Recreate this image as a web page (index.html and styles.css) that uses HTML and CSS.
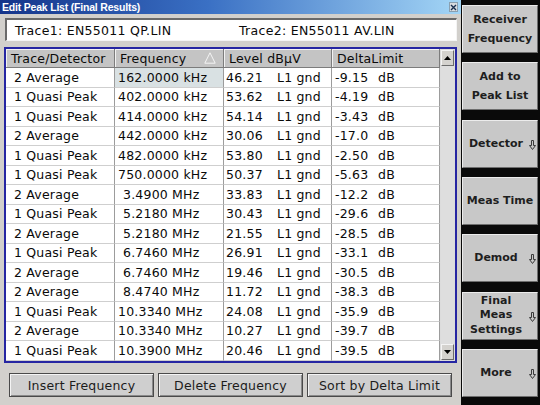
FILE: index.html
```html
<!DOCTYPE html>
<html>
<head>
<meta charset="utf-8">
<link rel="stylesheet" href="styles.css">
</head>
<body>
<div class="screen">
  <div class="dialog">
    <div class="titlebar">
      <span class="title">Edit Peak List (Final Results)</span>
      <span class="close"><svg width="7" height="7" viewBox="0 0 7 7"><path d="M1 1 L6 6 M6 1 L1 6" stroke="#1a3050" stroke-width="1.4"/></svg></span>
    </div>
    <div class="tracebox">
      <span class="t1">Trace1: EN55011 QP.LIN</span>
      <span class="t2">Trace2: EN55011 AV.LIN</span>
    </div>
    <div class="tableframe">
      <div class="peaks">
        <div class="hd">Trace/Detector</div>
        <div class="hd freq-hd">Frequency <svg class="sort" width="12" height="12" viewBox="0 0 12 12"><path d="M6 0.8 L11.2 11.2 L0.8 11.2 Z" fill="none" stroke="#f4f4f4" stroke-width="1"/></svg></div>
        <div class="hd">Level dBµV</div>
        <div class="hd">DeltaLimit</div>

        <div class="c tr">2 Average</div><div class="c fq sel">162.0000 kHz</div><div class="c lv"><span class="n">46.21</span>L1 gnd</div><div class="c dl"><span class="n">-9.15</span>dB</div>
        <div class="c tr">1 Quasi Peak</div><div class="c fq">402.0000 kHz</div><div class="c lv"><span class="n">53.62</span>L1 gnd</div><div class="c dl"><span class="n">-4.19</span>dB</div>
        <div class="c tr">1 Quasi Peak</div><div class="c fq">414.0000 kHz</div><div class="c lv"><span class="n">54.14</span>L1 gnd</div><div class="c dl"><span class="n">-3.43</span>dB</div>
        <div class="c tr">2 Average</div><div class="c fq">442.0000 kHz</div><div class="c lv"><span class="n">30.06</span>L1 gnd</div><div class="c dl"><span class="n">-17.0</span>dB</div>
        <div class="c tr">1 Quasi Peak</div><div class="c fq">482.0000 kHz</div><div class="c lv"><span class="n">53.80</span>L1 gnd</div><div class="c dl"><span class="n">-2.50</span>dB</div>
        <div class="c tr">1 Quasi Peak</div><div class="c fq">750.0000 kHz</div><div class="c lv"><span class="n">50.37</span>L1 gnd</div><div class="c dl"><span class="n">-5.63</span>dB</div>
        <div class="c tr">2 Average</div><div class="c fq short">3.4900 MHz</div><div class="c lv"><span class="n">33.83</span>L1 gnd</div><div class="c dl"><span class="n">-12.2</span>dB</div>
        <div class="c tr">1 Quasi Peak</div><div class="c fq short">5.2180 MHz</div><div class="c lv"><span class="n">30.43</span>L1 gnd</div><div class="c dl"><span class="n">-29.6</span>dB</div>
        <div class="c tr">2 Average</div><div class="c fq short">5.2180 MHz</div><div class="c lv"><span class="n">21.55</span>L1 gnd</div><div class="c dl"><span class="n">-28.5</span>dB</div>
        <div class="c tr">1 Quasi Peak</div><div class="c fq short">6.7460 MHz</div><div class="c lv"><span class="n">26.91</span>L1 gnd</div><div class="c dl"><span class="n">-33.1</span>dB</div>
        <div class="c tr">2 Average</div><div class="c fq short">6.7460 MHz</div><div class="c lv"><span class="n">19.46</span>L1 gnd</div><div class="c dl"><span class="n">-30.5</span>dB</div>
        <div class="c tr">2 Average</div><div class="c fq short">8.4740 MHz</div><div class="c lv"><span class="n">11.72</span>L1 gnd</div><div class="c dl"><span class="n">-38.3</span>dB</div>
        <div class="c tr">1 Quasi Peak</div><div class="c fq">10.3340 MHz</div><div class="c lv"><span class="n">24.08</span>L1 gnd</div><div class="c dl"><span class="n">-35.9</span>dB</div>
        <div class="c tr">2 Average</div><div class="c fq">10.3340 MHz</div><div class="c lv"><span class="n">10.27</span>L1 gnd</div><div class="c dl"><span class="n">-39.7</span>dB</div>
        <div class="c tr">1 Quasi Peak</div><div class="c fq">10.3900 MHz</div><div class="c lv"><span class="n">20.46</span>L1 gnd</div><div class="c dl"><span class="n">-39.5</span>dB</div>
      </div>
      <div class="scrollbar">
        <div class="sbtn"><svg width="7" height="4" viewBox="0 0 7 4"><path d="M3.5 0 L7 4 L0 4 Z" fill="#000"/></svg></div>
        <div class="track"></div>
        <div class="sbtn"><svg width="7" height="4" viewBox="0 0 7 4"><path d="M0 0 L7 0 L3.5 4 Z" fill="#000"/></svg></div>
      </div>
    </div>
    <div class="actions">
      <div class="btn">Insert Frequency</div>
      <div class="btn">Delete Frequency</div>
      <div class="btn">Sort by Delta Limit</div>
    </div>
  </div>
  <div class="softkeys">
    <div class="sk two"><span class="lbl">Receiver<br>Frequency</span></div>
    <div class="sk two"><span class="lbl">Add to<br>Peak List</span></div>
    <div class="sk"><span class="lbl">Detector</span><svg class="arr" width="7" height="10" viewBox="0 0 7 10"><path d="M2.5 0.5 H4.5 V5.5 H6.5 L3.5 9.5 L0.5 5.5 H2.5 Z" fill="none" stroke="#3a3a3a" stroke-width="1"/></svg></div>
    <div class="sk"><span class="lbl">Meas Time</span></div>
    <div class="sk"><span class="lbl">Demod</span><svg class="arr" width="7" height="10" viewBox="0 0 7 10"><path d="M2.5 0.5 H4.5 V5.5 H6.5 L3.5 9.5 L0.5 5.5 H2.5 Z" fill="none" stroke="#3a3a3a" stroke-width="1"/></svg></div>
    <div class="sk three"><span class="lbl">Final<br>Meas<br>Settings</span><svg class="arr" width="7" height="10" viewBox="0 0 7 10"><path d="M2.5 0.5 H4.5 V5.5 H6.5 L3.5 9.5 L0.5 5.5 H2.5 Z" fill="none" stroke="#3a3a3a" stroke-width="1"/></svg></div>
    <div class="sk"><span class="lbl">More</span><svg class="arr" width="7" height="10" viewBox="0 0 7 10"><path d="M2.5 0.5 H4.5 V5.5 H6.5 L3.5 9.5 L0.5 5.5 H2.5 Z" fill="none" stroke="#3a3a3a" stroke-width="1"/></svg></div>
  </div>
</div>
</body>
</html>
```

FILE: styles.css
```css
* { box-sizing: border-box; }
html, body { margin: 0; padding: 0; }
body {
  width: 540px;
  height: 405px;
  overflow: hidden;
  font-family: "DejaVu Sans", Verdana, sans-serif;
  color: #0a0a0a;
}
.screen {
  display: flex;
  width: 540px;
  height: 405px;
}
.dialog {
  width: 461px;
  height: 405px;
  background: #d2d0cc;
  display: flex;
  flex-direction: column;
}
.titlebar {
  height: 14px;
  background: linear-gradient(to right, #14348a 0%, #3a70c4 45%, #a4d6f6 100%);
  display: flex;
  align-items: center;
  justify-content: space-between;
  padding: 0 3px 0 2px;
}
.title {
  font-family: "Liberation Sans", Arial, sans-serif;
  font-weight: bold;
  font-size: 10.5px;
  color: #ffffff;
  letter-spacing: -0.2px;
  line-height: 14px;
}
.close {
  width: 9px;
  height: 10px;
  background: #d8dce0;
  border: 1px solid #8aa0b0;
  display: flex;
  align-items: center;
  justify-content: center;
}
.tracebox {
  margin: 4px 0 0 5px;
  width: 452px;
  height: 23px;
  background: #ffffff;
  border-top: 2px solid #6a6a6a;
  border-left: 2px solid #6a6a6a;
  border-bottom: 1px solid #f4f4f4;
  border-right: 1px solid #f4f4f4;
  display: flex;
  align-items: center;
  font-size: 12.5px;
  letter-spacing: 0.3px;
  padding-left: 8px;
}
.t1 { width: 224px; }
.tableframe {
  margin: 6px 0 0 4px;
  width: 453px;
  height: 316px;
  border: 2px solid #2626a2;
  display: flex;
  background: #ffffff;
}
.peaks {
  width: 434px;
  display: grid;
  grid-template-columns: 109px 109px 108px 108px;
  grid-template-rows: 19px repeat(15, 19.5px);
  font-size: 12.5px;
  letter-spacing: 0.2px;
}
.hd {
  background: #c4c4c4;
  border-right: 1px solid #7c7c7c;
  border-bottom: 1px solid #7c7c7c;
  box-shadow: inset 1px 1px 0 #f2f2f2;
  display: flex;
  align-items: center;
  padding-left: 5px;
  white-space: nowrap;
}
.freq-hd .sort { margin-left: 18px; }
.c {
  border-right: 1px solid #9c9c9c;
  border-bottom: 1px solid #cfcfcf;
  display: flex;
  align-items: center;
  white-space: nowrap;
  background: #ffffff;
}
.tr { padding-left: 8px; }
.fq { padding-left: 3px; }
.fq.short { padding-left: 8px; }
.sel { background: #d9e1e3; }
.lv { padding-left: 2px; }
.lv .n { width: 51px; }
.dl { padding-left: 3px; }
.dl .n { width: 43px; }
.scrollbar {
  width: 15px;
  display: flex;
  flex-direction: column;
  background: #dcdcdc;
  padding: 1px;
}
.sbtn {
  height: 16px;
  background: #d4d2ce;
  border-top: 1px solid #f4f4f4;
  border-left: 1px solid #f4f4f4;
  border-right: 1px solid #6c6c6c;
  border-bottom: 1px solid #6c6c6c;
  display: flex;
  align-items: center;
  justify-content: center;
}
.track { flex: 1; background: #dedede; }
.actions {
  margin-top: 10px;
  padding-left: 9px;
  display: flex;
  gap: 4px;
}
.btn {
  width: 145px;
  height: 24px;
  background: #cfcfcf;
  border: 1px solid #4a4a4a;
  box-shadow: inset 1px 1px 0 #f4f4f4, inset -1px -1px 0 #8a8a8a;
  display: flex;
  align-items: center;
  justify-content: center;
  font-size: 12.5px;
  letter-spacing: 0.2px;
  color: #1c1c1c;
}
.softkeys {
  width: 79px;
  height: 405px;
  background: #0a0a0a;
  padding: 5px 2px 0 1px;
  display: flex;
  flex-direction: column;
  gap: 9.33px;
}
.sk {
  height: 48px;
  background: #c8c8c8;
  border-top: 1px solid #ececec;
  border-left: 1px solid #ececec;
  border-right: 1px solid #6e6e6e;
  border-bottom: 1px solid #6e6e6e;
  display: flex;
  align-items: center;
  font-weight: bold;
  font-size: 11px;
  color: #1e1e1e;
}
.lbl {
  flex: 1;
  text-align: center;
  line-height: 14px;
}
.two .lbl { line-height: 19px; }
.three .lbl { line-height: 14.5px; }
.arr { margin-right: 1px; margin-top: 2px; }
```
